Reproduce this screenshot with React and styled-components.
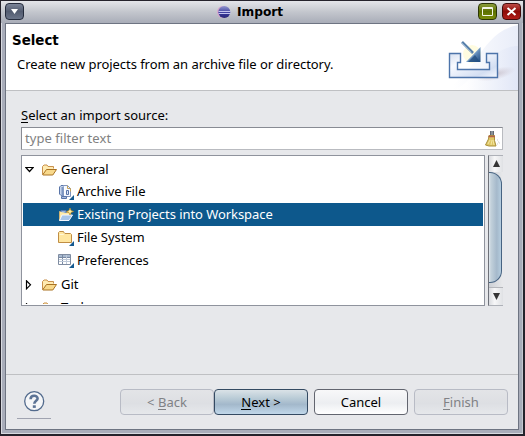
import React from 'react';
import styled, { createGlobalStyle } from 'styled-components';

const GlobalStyle = createGlobalStyle`
  * { box-sizing: border-box; }
  body { margin: 0; overflow: hidden; font: 13px/23px "Noto Sans", sans-serif; color: #000; }
  svg { display: block; flex: none; }
  u { text-decoration: none; box-shadow: inset 0 -1px currentColor; display: inline-block; line-height: 16px; }
`;

const Frame = styled.div`
  width: 525px;
  height: 436px;
  display: flex;
  flex-direction: column;
  background: #a9adba;
  border: 1px solid #25232c;
  border-bottom-width: 2px;
  border-right-width: 2px;
  box-shadow: inset 1px 0 #d8dae0, inset 0 -1px #d8dae0, inset -1px 0 #c5c8d0;
  padding: 0 4px 4px;
`;

const TitleBar = styled.header`
  height: 22px;
  flex: none;
  margin: 0 -4px;
  padding: 2px 2px 0 4px;
  display: grid;
  grid-template-columns: 44px 1fr 43px;
  background: linear-gradient(#e4e5e9, #c3c6cd 50%, #a9adb8);
`;

const Caption = styled.div`
  display: flex;
  gap: 6px;
  padding: 1px 0 0 167px;
  font: bold 12.2px/16px "DejaVu Sans", sans-serif;
`;

const WindowControls = styled.div`
  display: flex;
  gap: 5px;
`;

const CONTROL_FILLS = {
  menu: 'linear-gradient(#7b8498, #535c70 50%, #6b7589)',
  maximize: 'linear-gradient(#8b9d3b, #5c7001 50%, #7b8d0b)',
  close: 'linear-gradient(#bd4a45, #8d0b08 50%, #b01d18)',
};

const CONTROL_EDGES = { menu: '#252c3d', maximize: '#2c3506', close: '#420a0a' };

const WindowButton = styled.button`
  width: 19px;
  height: 17px;
  padding: 0;
  border: 1px solid ${(p) => CONTROL_EDGES[p.$kind]};
  border-radius: 4px;
  background: ${(p) => CONTROL_FILLS[p.$kind]};
`;

const Dialog = styled.main`
  flex: 1;
  display: flex;
  flex-direction: column;
  border: 1px solid #6e7482;
  background: #e7e8eb;
`;

const Banner = styled.section`
  height: 67px;
  flex: none;
  display: flex;
  justify-content: space-between;
  background: #fff;
  border-bottom: 1px solid #bfc0c3;
`;

const BannerText = styled.div`
  padding: 8px 0 0 6px;
  white-space: nowrap;
`;

const Heading = styled.h1`
  margin: 0;
  font: bold 13.4px/18px "DejaVu Sans", sans-serif;
`;

const Summary = styled.p`
  margin: 3px 0 0 5px;
  line-height: 23px;
  letter-spacing: -0.055px;
`;

const Body = styled.section`
  height: 284px;
  flex: none;
  padding: 13px 15px 0;
  border-bottom: 1px solid #bfc0c3;
`;

const Label = styled.div`
  height: 23px;
  line-height: 22px;
`;

const FilterBox = styled.div`
  height: 23px;
  display: flex;
  align-items: center;
  justify-content: space-between;
  padding: 0 2px 0 3px;
  background: #fff;
  border: 1px solid #b9bbc0;
  border-top-color: #888b93;
  border-left-color: #888b93;
  color: #818181;
  letter-spacing: 0.05px;
`;

const TreeArea = styled.div`
  display: flex;
  gap: 3px;
  margin-top: 5px;
  height: 151px;
`;

const Tree = styled.div`
  width: 465px;
  padding: 1px 1px 1px;
  overflow: hidden;
  background: #fff;
  border: 1px solid #8f939d;
`;

const TreeClip = styled.div`
  height: 147px;
  overflow: hidden;
`;

const Row = styled.div`
  height: 23px;
  display: flex;
  align-items: center;
  gap: ${(p) => (p.$nested ? 3 : 4)}px;
  padding: ${(p) => (p.$nested ? '0 0 0 35px' : '2px 0 0 2px')};
  color: ${(p) => (p.$selected ? '#fff' : '#000')};
  background: ${(p) => (p.$selected ? '#0d588c' : 'transparent')};
  letter-spacing: -0.06px;
  white-space: nowrap;
`;

const Toggle = styled.span`
  width: 9px;
  margin-right: 4px;
`;

const ScrollBar = styled.div`
  width: 15px;
  display: flex;
  flex-direction: column;
  background: linear-gradient(90deg, #cdd0d5, #e8e9eb);
  border: 1px solid #aeb1b8;
  border-left-color: #6e7179;
  border-right: 0;
`;

const ScrollButton = styled.div`
  height: ${(p) => p.$height}px;
  margin-top: ${(p) => p.$gap || 0}px;
  border-top: ${(p) => (p.$gap ? '1px solid #b4b6bb' : '0')};
  display: flex;
  align-items: center;
  justify-content: center;
  background: linear-gradient(90deg, #d9dbdf, #f7f7f8 40%, #dfe1e4);
`;

const Thumb = styled.div`
  height: 111px;
  margin-right: 1px;
  border: solid #466382;
  border-width: 1px 1px 1px 0;
  border-radius: 0 12px 12px 0;
  background: linear-gradient(90deg, #e1e8ee, #c4d2dc 15%, #a5b9cb 65%, #b5cddf);
`;

const Footer = styled.footer`
  flex: 1;
  display: flex;
  justify-content: space-between;
  padding: 14px 10px 0 11px;
`;

const Help = styled.div`
  width: 34px;
  height: 30px;
  padding-left: 7px;
  padding-top: 2px;
  border-bottom: 1px solid #a0a3b0;
`;

const Actions = styled.div`
  display: flex;
`;

const BUTTON_LOOKS = {
  disabled: ['linear-gradient(#e3e4e7, #dddfe3 55%, #e6e8eb)', '#b8bbc5', '#808185'],
  primary: ['linear-gradient(#dae2e7, #b9cbd6 35%, #a3b8cb 60%, #c1d8ea)', '#344a62', '#000'],
  normal: ['linear-gradient(#f8f8f9, #eceef1 55%, #fff)', '#62656f', '#000'],
};

const ActionButton = styled.button`
  width: 94px;
  height: 26px;
  margin-left: ${(p) => p.$gap || 0}px;
  padding: 0 0 1px;
  font: inherit;
  line-height: 20px;
  border: 1px solid ${(p) => BUTTON_LOOKS[p.$look][1]};
  border-radius: 4px;
  background: ${(p) => BUTTON_LOOKS[p.$look][0]};
  color: ${(p) => BUTTON_LOOKS[p.$look][2]};
`;

const EclipseLogo = () => (
  <svg width="15" height="16" viewBox="0 0 15 16">
    <defs>
      <linearGradient id="orb" x1="0" y1="0" x2="0" y2="1">
        <stop offset="0" stopColor="#9298cf" />
        <stop offset=".6" stopColor="#37389a" />
        <stop offset="1" stopColor="#2b2976" />
      </linearGradient>
    </defs>
    <circle cx="7" cy="8" r="6" fill="#d9a5cb" />
    <circle cx="8.3" cy="8" r="6" fill="url(#orb)" />
    <path d="M2.5 7.5h12M2.5 9.5h12" stroke="#c4c4ee" />
  </svg>
);

const FolderOpen = () => (
  <svg width="15" height="12" viewBox="0 0 15 12">
    <path d="M.5 10.5V2.5l1.5-1.5h3l1 1.5h5.5v2" fill="#ffebb1" stroke="#c9914d" />
    <path d="M.7 10.8 4.5 5.5h10L10.8 11H1z" fill="#f8d98c" stroke="#a97222" />
  </svg>
);

const Corner = ({ y = 16 }) => <path d={`M16 ${y - 5}v5h-5z`} fill="#15598f" />;

const ArchiveIcon = () => (
  <svg width="16" height="16" viewBox="0 0 16 16">
    <path d="M5.5 1.5h4l3 3v8h-7z" fill="#f5f8ff" stroke="#8196bd" />
    <path d="M9.5 1.5v3h3v3" fill="none" stroke="#c3a25c" />
    <path d="M5.5 1.5H3L1.5 3v7L3 11.5h2" fill="#c5d4ec" stroke="#5874a8" />
    <path d="M4.5 3v9" stroke="#7d96c3" strokeWidth="2" />
    <path d="M6.5 3v8" stroke="#fff" />
    <path d="M8.5 6.5h2v4h-2z" fill="#dbe5f6" stroke="#5874a8" />
    <path d="M3.5 12.5h5v2h-5z" fill="#a9bddf" stroke="#5874a8" />
    <Corner />
  </svg>
);

const ProjectIcon = () => (
  <svg width="16" height="16" viewBox="0 0 16 16">
    <path d="M1.5 13.5v-9h4l1 1h6v4" fill="#ffe9a7" stroke="#d1b473" />
    <path d="M3 5V3.5h5V6" fill="#94b5df" stroke="#5478b2" />
    <path d="M1.5 13.5 4 8h10.5L11 13.5z" fill="#a8c5ea" stroke="#f3f7ff" />
    <path d="M12 1 13 3.5 15.5 4.5 13 5.5 12 8 11 5.5 8.5 4.5 11 3.5z" fill="#fff1a6" stroke="#b98922" strokeWidth=".7" />
  </svg>
);

const FileSystemIcon = () => (
  <svg width="16" height="16" viewBox="0 0 16 16">
    <path d="M.5 12.5v-10l1-1h4l1 2h6l1 1v8z" fill="#ffe6a0" stroke="#c08e44" />
    <path d="M1.5 4.5h4l1-1" fill="none" stroke="#fff8d8" />
    <Corner />
  </svg>
);

const PreferencesIcon = () => (
  <svg width="16" height="16" viewBox="0 0 16 16">
    <path d="M.5 1.5h12v10H.5z" fill="#fff" stroke="#7f8ca1" />
    <path d="M1 2h11v2H1z" fill="#a8b9cf" />
    <path d="M1 4.5h11M4.5 2v9" stroke="#7889a3" />
    <path d="M1 6.5h11M1 8.5h11M8.5 2v9" stroke="#bec9d8" />
    <Corner y={15} />
  </svg>
);

const BroomIcon = () => (
  <svg width="16" height="18" viewBox="0 0 16 18">
    <path d="M6 1h4v4H6z" fill="#626871" />
    <path d="M7.5 1h1v4h-1z" fill="#aeb7be" />
    <path d="M5 5.5h5.5v5l1.5 5.5H5l-3.5-1L4.5 9z" fill="#dfc766" stroke="#a98f3c" />
    <path d="M4.5 6.5h6.5" stroke="#b66048" strokeWidth="1.5" />
    <path d="m6 10-2 4m4-4-1 5m2-5 1 5" stroke="#f3e6a0" />
    <path d="M13 10h1m0 2h1m-2 2h1m1-1h1" stroke="#cfcfcf" />
  </svg>
);

const ImportArt = () => (
  <svg width="90" height="66" viewBox="0 0 90 66">
    <defs>
      <linearGradient id="wash" x1="0" y1="0" x2="1" y2="0">
        <stop offset=".2" stopColor="#fff" />
        <stop offset="1" stopColor="#dfe5f6" />
      </linearGradient>
      <linearGradient id="tray" x1="0" y1="0" x2="1" y2="1">
        <stop stopColor="#d7e0f0" />
        <stop offset=".3" stopColor="#f8faff" />
        <stop offset=".75" stopColor="#d3def2" />
        <stop offset="1" stopColor="#f7f9ff" />
      </linearGradient>
      <linearGradient id="head" x1="0" y1="0" x2="1" y2="1">
        <stop offset=".3" stopColor="#c6ddf3" />
        <stop offset=".6" stopColor="#5c86b5" />
        <stop offset="1" stopColor="#1d4a80" />
      </linearGradient>
      <radialGradient id="shade">
        <stop stopColor="#b5a9b5" stopOpacity=".6" />
        <stop offset="1" stopColor="#c8bdc8" stopOpacity="0" />
      </radialGradient>
    </defs>
    <path d="M10 66C49 58 50 8 90 1v65z" fill="url(#wash)" opacity=".7" />
    <path d="M25 66c20-5 35-44 65-44v44z" fill="url(#wash)" opacity=".8" />
    <ellipse cx="68" cy="50" rx="20" ry="6" fill="url(#shade)" transform="rotate(-14 68 50)" />
    <circle cx="44" cy="30" r="9" fill="#fffbd8" opacity=".8" />
    <path d="M21.5 29.5h11v9h-3v7h32v-7h-3v-9h11v24h-48z" fill="url(#tray)" stroke="#4d74aa" strokeWidth="1.4" />
    <path d="m34 18 11 11" stroke="#577faa" strokeWidth="2.6" />
    <path d="m33.5 18.5 10 10" stroke="#a9c3da" strokeWidth=".8" />
    <path d="M52.5 23v15H38z" fill="url(#head)" />
    <path d="m47 31 5 7H40z" fill="#204c7d" opacity=".75" />
  </svg>
);

const HelpIcon = () => (
  <svg width="22" height="22" viewBox="0 0 22 22">
    <circle cx="10.2" cy="10.2" r="9.5" fill="#f5f6f8" stroke="#536b8d" strokeWidth="1.3" />
    <path d="M6.6 8.2C6.6 3.8 13.8 3.8 13.6 7.6 13.4 9.8 10.4 9.8 10.3 12.8" fill="none" stroke="#5c7395" strokeWidth="2.6" />
    <path d="M8.8 14.3h3v2.6h-3z" fill="#5c7395" />
  </svg>
);

const Arrow = ({ direction }) => {
  const shapes = {
    open: 'M.8 1.5h7.4L4.5 5.5z',
    closed: 'M1.5 .8v8L5.5 4.8z',
    up: 'M4.5 1 8 8H1z',
    down: 'M1 1h7L4.5 8z',
  };
  const hollow = direction === 'open' || direction === 'closed';
  return (
    <svg width="9" height={direction === 'open' ? 7 : 10} viewBox={direction === 'open' ? '0 0 9 7' : '0 0 9 10'}>
      <path d={shapes[direction]} fill={hollow ? '#fff' : '#353535'} stroke={hollow ? '#000' : 'none'} strokeWidth="1.2" />
    </svg>
  );
};

const SOURCES = [
  { label: 'Archive File', Icon: ArchiveIcon },
  { label: 'Existing Projects into Workspace', Icon: ProjectIcon, selected: true },
  { label: 'File System', Icon: FileSystemIcon },
  { label: 'Preferences', Icon: PreferencesIcon },
];

const Folder = ({ label, open }) => (
  <Row>
    <Toggle><Arrow direction={open ? 'open' : 'closed'} /></Toggle>
    <FolderOpen />
    {label}
  </Row>
);

export default function App() {
  return (
    <>
      <GlobalStyle />
      <Frame>
        <TitleBar>
          <WindowControls>
            <WindowButton $kind="menu" aria-label="Window menu">
              <svg width="17" height="15"><path d="M5 5h7L8.5 10z" fill="#fff" /></svg>
            </WindowButton>
          </WindowControls>
          <Caption><EclipseLogo />Import</Caption>
          <WindowControls>
            <WindowButton $kind="maximize" aria-label="Maximize">
              <svg width="17" height="15"><path d="M3.5 3.5h10v8h-10zM3 4.5h11" fill="none" stroke="#f3f5e7" /></svg>
            </WindowButton>
            <WindowButton $kind="close" aria-label="Close">
              <svg width="17" height="15"><path d="m4.5 4 8 7m0-7-8 7" stroke="#fff" strokeWidth="2" /></svg>
            </WindowButton>
          </WindowControls>
        </TitleBar>
        <Dialog>
          <Banner>
            <BannerText>
              <Heading>Select</Heading>
              <Summary>Create new projects from an archive file or directory.</Summary>
            </BannerText>
            <ImportArt />
          </Banner>
          <Body>
            <Label><u>S</u>elect an import source:</Label>
            <FilterBox>type filter text<BroomIcon /></FilterBox>
            <TreeArea>
              <Tree>
                <TreeClip>
                  <Folder label="General" open />
                  {SOURCES.map(({ label, Icon, selected }) => (
                    <Row key={label} $nested $selected={selected}><Icon />{label}</Row>
                  ))}
                  <Folder label="Git" />
                  <Folder label="Tasks" />
                </TreeClip>
              </Tree>
              <ScrollBar>
                <ScrollButton $height={16}><Arrow direction="up" /></ScrollButton>
                <Thumb />
                <ScrollButton $height={18} $gap={4}><Arrow direction="down" /></ScrollButton>
              </ScrollBar>
            </TreeArea>
          </Body>
          <Footer>
            <Help><HelpIcon /></Help>
            <Actions>
              <ActionButton $look="disabled">&lt; <u>B</u>ack</ActionButton>
              <ActionButton $look="primary"><u>N</u>ext &gt;</ActionButton>
              <ActionButton $look="normal" $gap={6}>Cancel</ActionButton>
              <ActionButton $look="disabled" $gap={6}><u>F</u>inish</ActionButton>
            </Actions>
          </Footer>
        </Dialog>
      </Frame>
    </>
  );
}
